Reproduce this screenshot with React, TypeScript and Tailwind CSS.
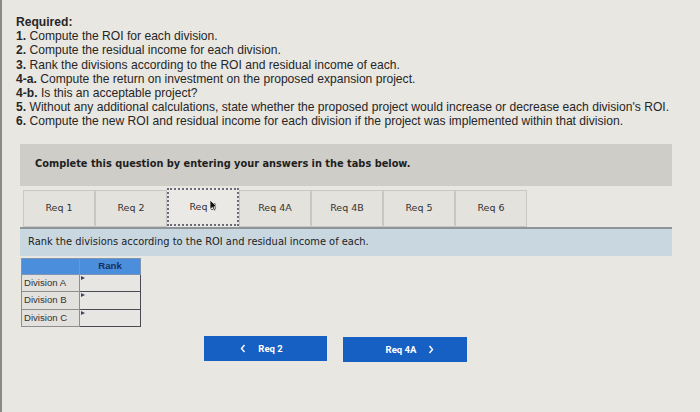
import React from 'react'

const requirements: [string, string][] = [
  ['1.', 'Compute the ROI for each division.'],
  ['2.', 'Compute the residual income for each division.'],
  ['3.', 'Rank the divisions according to the ROI and residual income of each.'],
  ['4-a.', 'Compute the return on investment on the proposed expansion project.'],
  ['4-b.', 'Is this an acceptable project?'],
  ['5.', "Without any additional calculations, state whether the proposed project would increase or decrease each division's ROI."],
  ['6.', 'Compute the new ROI and residual income for each division if the project was implemented within that division.'],
]

const tabs = ['Req 1', 'Req 2', 'Req 3', 'Req 4A', 'Req 4B', 'Req 5', 'Req 6']

function Cursor() {
  return (
    <svg width="9" height="13" viewBox="0 0 9 13" className="absolute left-[40px] top-[9px]">
      <path d="M1 1 L1 10.5 L3.4 8.4 L5.2 12 L6.6 11.3 L4.9 7.9 L8 7.7 Z" fill="#111" stroke="#f4f4f4" strokeWidth="0.8" />
    </svg>
  )
}

export default function App() {
  return (
    <div className="w-[700px] h-[412px] overflow-hidden bg-[#e9e7e2] text-[#262626] border-l-[2px] border-[#8a8987] relative">
      {/* Required list */}
      <div className="pl-[14px] pt-[15px] font-['Liberation_Sans',Arial,sans-serif] text-[12.1px] leading-[14.2px]">
        <p className="font-bold">Required:</p>
        {requirements.map(([n, t]) => (
          <p key={n}>
            <span className="font-bold">{n}</span> {t}
          </p>
        ))}
      </div>

      <div className="ml-[18px] w-[652px] mt-[15px] font-['DejaVu_Sans',Verdana,sans-serif]">
        {/* Instruction header */}
        <div className="h-[42px] bg-[#cfcdc8] flex items-center pl-[15px]">
          <p className="font-bold text-[9.8px] text-[#1e1e1e]">Complete this question by entering your answers in the tabs below.</p>
        </div>

        {/* Tabs */}
        <div className="flex items-end pl-[3px] h-[41px]">
          {tabs.map((t, i) =>
            i === 2 ? (
              <div
                key={t}
                className="relative w-[72px] h-[38px] mb-[1px] border-[2px] border-dotted border-[#6c6c78] bg-[#ebe9e5] flex items-center justify-center text-[9.5px] text-[#333]"
              >
                {t}
                <Cursor />
              </div>
            ) : (
              <div
                key={t}
                className="w-[72px] h-[37px] border border-[#c9c7c2] bg-[#e4e2dd] flex items-center justify-center text-[9.5px] text-[#333]"
              >
                {t}
              </div>
            )
          )}
        </div>

        {/* Question bar */}
        <div className="h-[29px] bg-[#c9d7e0] border-t-[2px] border-[#8f9499] flex items-center pl-[8px]">
          <p className="text-[9.9px] text-[#222]">Rank the divisions according to the ROI and residual income of each.</p>
        </div>

        {/* Answer table */}
        <table className="mt-[2px] ml-[1px] border-collapse font-['Liberation_Sans',Arial,sans-serif] text-[9.6px]">
          <thead>
            <tr className="h-[16px] bg-[#4b8fdc]">
              <th className="w-[58px] border border-[#7d95b3]"></th>
              <th className="w-[61px] border border-[#7d95b3] font-bold text-[#17305a] text-[9.6px]">Rank</th>
            </tr>
          </thead>
          <tbody>
            {['Division A', 'Division B', 'Division C'].map(d => (
              <tr key={d} className="h-[17.5px]">
                <td className="border border-[#8e8e8e] bg-[#e3e1dd] pl-[2px] text-[#333]">{d}</td>
                <td className="relative border-[1.5px] border-[#4a4a55] bg-[#e8e6e2]">
                  <span className="absolute left-[1px] top-[1px] w-0 h-0 border-y-[2.5px] border-y-transparent border-l-[4px] border-l-[#3a4460]" />
                </td>
              </tr>
            ))}
          </tbody>
        </table>

        {/* Nav buttons */}
        <div className="flex gap-[16px] ml-[184px] mt-[9px] font-['Liberation_Sans_Narrow','Roboto',sans-serif]">
          <button className="w-[123px] h-[25px] bg-[#1660c4] text-white text-[9.5px] font-bold flex items-center justify-center gap-[12px]">
            <svg width="6" height="9" viewBox="0 0 6 9"><path d="M4.5 1 L1.5 4.5 L4.5 8" fill="none" stroke="white" strokeWidth="1.4" /></svg>
            <span className="mr-[8px]">Req 2</span>
          </button>
          <button className="w-[124px] h-[25px] mt-[1px] bg-[#1660c4] text-white text-[9.5px] font-bold flex items-center justify-center gap-[12px]">
            <span className="ml-[10px]">Req 4A</span>
            <svg width="6" height="9" viewBox="0 0 6 9"><path d="M1.5 1 L4.5 4.5 L1.5 8" fill="none" stroke="white" strokeWidth="1.4" /></svg>
          </button>
        </div>
      </div>
    </div>
  )
}
